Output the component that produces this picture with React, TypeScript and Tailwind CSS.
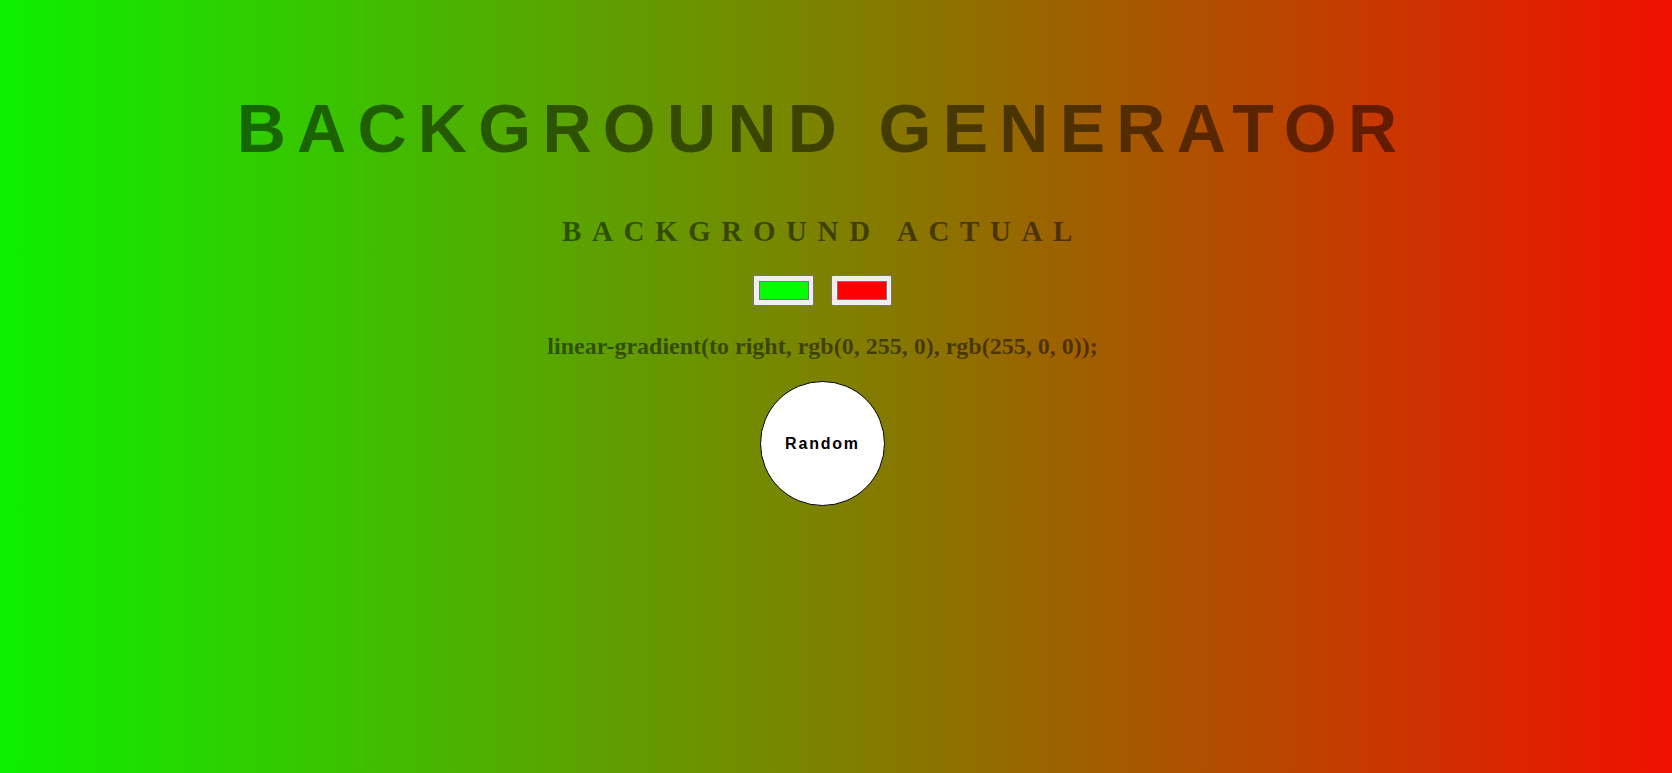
const swatches = [
  { name: "color1", fill: "bg-[#00ff00]" },
  { name: "color2", fill: "bg-[#ff0000]" },
];

function App() {
  return (
    <main className="min-h-screen w-full bg-[linear-gradient(to_right,#0cf000,#f01000)] pt-[94px] pr-[27px] text-black/50">
      <div className="flex flex-col items-center">
        <h1 className="font-['Liberation_Sans',Arial,sans-serif] text-[68px] font-bold uppercase leading-none tracking-[11.3px]">
          Background Generator
        </h1>

        <h3 className="mt-[55px] font-['Liberation_Serif','Times_New_Roman',serif] text-[29px] font-bold uppercase leading-none tracking-[10.6px]">
          Background Actual
        </h3>

        <div className="mt-[29px] flex gap-[17px]">
          {swatches.map(({ name, fill }) => (
            <label
              key={name}
              className="flex h-[31px] w-[61px] items-center justify-center rounded-[2px] border border-[#767676] bg-[#efefef]"
            >
              <span className={`h-[19px] w-[50px] border border-[#777777] ${fill}`} />
            </label>
          ))}
        </div>

        <h3 className="mt-[28px] font-['Liberation_Serif','Times_New_Roman',serif] text-[24px] font-bold leading-none">
          linear-gradient(to right, rgb(0, 255, 0), rgb(255, 0, 0));
        </h3>

        <button className="mt-[23px] flex h-[125px] w-[125px] items-center justify-center rounded-full border border-black bg-white font-['Liberation_Sans',Arial,sans-serif] text-[16px] font-bold tracking-[1.8px] text-black">
          Random
        </button>
      </div>
    </main>
  );
}

export default App;
